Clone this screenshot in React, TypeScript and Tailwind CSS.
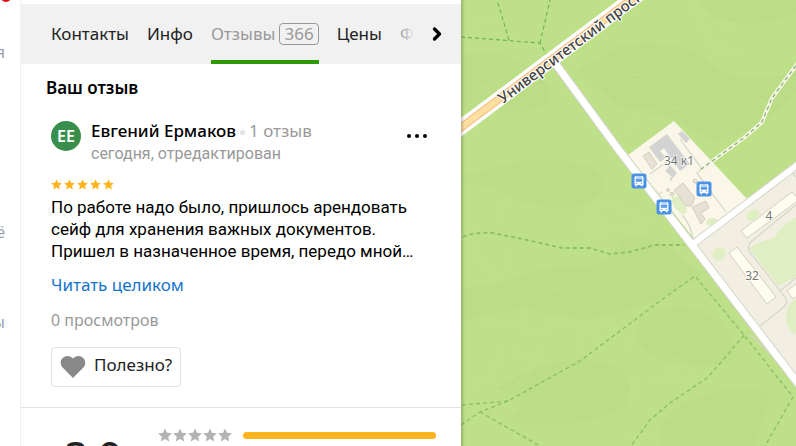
import { ChevronRight } from "lucide-react";
import clsx from "clsx";

const STAR =
  "M6 0.4 7.7 4.1 11.8 4.6 8.8 7.4 9.6 11.5 6 9.4 2.4 11.5 3.2 7.4 0.2 4.6 4.3 4.1z";

const Stars = ({ className }: { className: string }) => (
  <>
    {[0, 1, 2, 3, 4].map((i) => (
      <svg key={i} viewBox="0 0 12 12" className={clsx("fill-current", className)}>
        <path d={STAR} />
      </svg>
    ))}
  </>
);

const BusStop = ({ x, y }: { x: number; y: number }) => (
  <g transform={`translate(${x} ${y})`}>
    <rect x="-7.5" y="-7.5" width="15" height="15" rx="2.5" fill="#4c93e6" />
    <path
      d="M-3-5h6q1.3 0 1.5 1.5V4H3.6v1.2H1.8V4h-3.6v1.2h-1.8V4h-.9v-7.5Q-4.3-5-3-5z"
      fill="#fff"
    />
    <path d="M-3.2-2.4h6.4v3.2h-6.4z" fill="#5b9be8" />
    <path d="M-2.8-4h5.6M-3.2 2.4h1.4M1.8 2.4h1.4" stroke="#4c93e6" strokeWidth=".8" />
  </g>
);

const Forest = () => (
  <>
    <g fill="#bbdd86">
      <path d="M461 56q35-8 60 6t30 30-34 20-56-4z" />
      <path d="M500 165q50-12 94 3 24 24-10 36t-84-12-39 13v-30q20-2 39-10z" />
      <path d="M461 288q40-4 66-14t54-8 36-20 50 1l36 29-60 30-60 14-62-12-60 14z" />
      <path d="M530 370q35-14 70-8t30 32-70 30-45-10-20-26z" />
      <path d="M620 45q60-8 92 18t84 8v22l-30 30-48 20-50-26-50-10-40-36z" />
      <path d="M640 318q36-18 60-8t34 34-30 22-50-8-20-20z" />
      <path d="M690 400q44-18 80-6l-14 52h-96q-4-30 30-46z" />
      <path d="M700 0h96v14q-40 14-66 8T700 0z" />
    </g>
    <g fill="none" stroke="#c2e28c" strokeWidth="1">
      <path d="M475 25q14-8 25-2t20 22M470 88q20 2 30-8t26 2 26-7" />
      <path d="M500 160q20 12 13 28t-15 30M478 225q-8 18 3 34t22 18 4-22" />
      <path d="M590 212q14-13 29-4t27 10-10 9-30-2-16 9M590 222q-15 2-5 9t18 1" />
      <path d="M472 315q20 9 36 9t18-10 16-4-4-13 23-6M525 335q30-12 54-8t32-6" />
      <path d="M514 350q12 10 21 3t-4 16-18 6M580 337q16-8 19 2t-20 4" />
      <path d="M610 383q26-11 24 4t-20 7M655 380q28 6 36-6t-20-15" />
      <path d="M626 348q4-12 20-15t22-15M655 358q18-8 26 3t-24 6M690 320q20 2 26 14t-15 6" />
      <path d="M614 78q30-8 43 2t30-4M640 108q28 8 48-5t30 14 20 2" />
      <path d="M697 0q-4 14 5 26t12 25M715 45q12-9 10 4t14 2M723 28q14-11 12-1" />
      <path d="M628 130q6-18 28-22t30 8M735 92q6 14 19 8t10 18" />
      <path d="M465 385q16 3 26-11t8-23M630 438q22 4 36-10t26 4M666 418q24-9 28 0" />
    </g>
  </>
);

const MapView = () => (
  <svg
    viewBox="461 0 335 446"
    preserveAspectRatio="xMinYMin slice"
    className="h-full w-full"
    role="img"
    aria-label="Карта"
  >
    <rect x="461" width="335" height="446" fill="#bee088" />
    <Forest />
    <path d="M628 155 674 121 747 199 695 240z" fill="#faf7e9" />
    <path d="M695 242 796 168V382z" fill="#f2efe2" />

    <g fill="#dfeec3">
      <path d="M749 248 760 242 773 238 784 225 796 217V277L778 286z" />
      <path d="M672 197q8-2 12 4t2 11-9-2-5-13z" />
      <ellipse cx="712" cy="222" rx="6" ry="4" />
      <ellipse cx="753" cy="215" rx="7" ry="5" transform="rotate(-38 753 215)" />
      <ellipse cx="719" cy="254" rx="7" ry="6" transform="rotate(-38 719 254)" />
      <ellipse cx="799" cy="317" rx="13" ry="18" />
    </g>

    <g fill="none" stroke="#d6d5cb" strokeWidth="1.2">
      <path d="M796 205 752 241q-5 4-3 10L785 297q4 5-1 10L760 326M780 291 796 278" />
      <path d="M650 174 668 161M680 139 702 169 697 173 726 212M682 215q10 11 11 25M656 196l6-4M790 170l6 7M750 335 796 378" />
    </g>

    <g fill="#d3d3d3">
      <path d="M649 147 667 134 690 164 680 171 664 148 660 151 666 158 660 162z" />
      <path d="M678 134 682 131 690 139 686 143zM665 171 670 165 677 173 673 178z" />
      <circle cx="671" cy="179" r="1.5" />
    </g>
    <g fill="#e6e1d2" stroke="#d2cec0">
      <path d="M643 156 649 152 657 164 652 169z" />
      <path d="M674 190 683 183 695 198 691 206 686 206z" />
      <path d="M692 207 706 201 709 208 701 213 705 219 701 224z" />
      <circle cx="668" cy="190" r="1.5" />
      <circle cx="672" cy="194" r="2" />
      <circle cx="695" cy="181" r="2" />
    </g>
    <g fill="#fffdee" stroke="#d5cfc0">
      <path d="M741 231 792 192 799 200 747 238z" />
      <path d="M729 253 737 247 776 297 767 304z" />
      <path d="M787 291 800 281V294L793 299z" />
    </g>

    <path d="M800 60 772 98 762 122 745 137 700 170" fill="none" stroke="#f5f5e2" strokeWidth="4" />
    <path
      d="M800 60 772 98 762 122 745 137 700 170"
      fill="none"
      stroke="#7fae72"
      strokeWidth="1.2"
      strokeDasharray="4 3"
    />

    <g fill="none" stroke="#8cc068" strokeWidth="1.4" strokeDasharray="4 3">
      <path d="M461 37 540 43 548 57M540 43 550 0M509 40 497 0" stroke="#6fb35a" strokeWidth="1.2" />
      <path
        d="M463 237Q472 232 493 233L527 240 562 248 590 248 610 254 630 252 655 245 684 245"
        strokeWidth="1.8"
      />
      <path d="M462 405 508 401 580 361 660 301 695 276 744 335 793 397 765 446" />
      <path d="M744 335 730 352 707 378 670 403 650 420 631 446" />
      <path d="M508 401 480 412 461 425M480 412 540 446" />
    </g>

    <g fill="none">
      <path d="M555 63 618 149 695 249 800 386" stroke="#d5d5cd" strokeWidth="9" />
      <path d="M693 244 800 163" stroke="#d5d5cd" strokeWidth="8" />
      <path d="M555 63 618 149 695 249 800 386" stroke="#fff" strokeWidth="7" />
      <path d="M693 244 800 163" stroke="#fff" strokeWidth="6" />
      <path d="M455 132 640-7" stroke="#fff" strokeWidth="15" />
      <path d="M455 132 640-7" stroke="#f4b77a" strokeWidth="8" />
      <path d="M455 132 640-7" stroke="#fde0a0" strokeWidth="6" />
      <path id="avenue" d="M503 104 703-46" />
    </g>

    <g
      fill="#444"
      stroke="#fff"
      strokeWidth="2"
      strokeLinejoin="round"
      paintOrder="stroke"
      className="font-['Noto_Sans',sans-serif]"
    >
      <text fontSize="15" fontWeight="500">
        <textPath href="#avenue">Университетский проспект</textPath>
      </text>
      <g fontSize="12" fill="#777" textAnchor="middle" strokeOpacity=".7">
        <text x="679" y="165">34 к1</text>
        <text x="769" y="220">4</text>
        <text x="752" y="280">32</text>
      </g>
    </g>

    <BusStop x={639} y={181} />
    <BusStop x={704} y={189} />
    <BusStop x={664} y={207} />
  </svg>
);

const Tabs = () => (
  <nav className="mt-1 flex h-15 shrink-0 items-stretch bg-[#f1f1f1] pr-2.5 pl-[30px]">
    <div className="relative flex min-w-0 flex-1 gap-[18px] overflow-hidden text-[#222]">
      <button>Контакты</button>
      <button>Инфо</button>
      <button className="flex items-center gap-1 border-b-4 border-[#2c9a00] pt-1 text-[#999]">
        Отзывы
        <span className="rounded-sm border border-[#999] px-1 leading-5">366</span>
      </button>
      <button>Цены</button>
      <button>Фото</button>
      <div className="pointer-events-none absolute inset-y-0 right-0 w-12 bg-linear-to-r from-transparent to-[#f1f1f1] to-75%" />
    </div>
    <button aria-label="Следующие разделы" className="w-6">
      <ChevronRight size={20} strokeWidth={4} className="text-black" />
    </button>
  </nav>
);

const Review = () => (
  <article className="pr-7 pl-[30px]">
    <header className="flex items-start pt-[19px]">
      <div className="mt-0.5 mr-2.5 flex size-[30px] shrink-0 items-center justify-center rounded-full bg-[#388e4a] text-base font-semibold text-white">
        ЕЕ
      </div>
      <div className="flex-1 leading-6">
        <p className="text-[#999]">
          <span className="font-medium text-black">Евгений Ермаков</span>
          <span className="mx-1 inline-block size-[5px] rounded-full bg-[#e2e2e2] align-middle" />1
          отзыв
        </p>
        <p className="font-['Roboto',sans-serif] text-base leading-[22px] text-[#999]">
          сегодня, отредактирован
        </p>
      </div>
      <button aria-label="Ещё" className="mt-[5px] mr-1.5 flex h-6 items-center gap-1">
        <i className="size-1 rounded-full bg-black" />
        <i className="size-1 rounded-full bg-black" />
        <i className="size-1 rounded-full bg-black" />
      </button>
    </header>
    <div className="mt-3.5 flex gap-0.5 text-[#ffb41e]" role="img" aria-label="Оценка 5">
      <Stars className="size-[11px]" />
    </div>
    <p className="mt-1.5 font-['Roboto',sans-serif] leading-[22px] text-black">
      По работе надо было, пришлось арендовать
      <br />
      сейф для хранения важных документов.
      <br />
      Пришел в назначенное время, передо мной…
    </p>
    <a href="#review" className="mt-[11px] block leading-6 text-[#1473cc]">
      Читать целиком
    </a>
    <p className="mt-[11px] text-base text-[#999]">0 просмотров</p>
    <button className="mt-[15px] flex h-10 items-center gap-2 rounded border border-[#e2e2e2] px-2 pb-1 text-[#222]">
      <svg viewBox="0 0 26 24" className="mt-1 h-6 w-[26px] fill-[#888]">
        <path d="M13 23 2.6 12.6C-3.4 5 6.500-3.300 13 3.600 19.500-3.300 29.400 5 23.400 12.600z" />
      </svg>
      Полезно?
    </button>
  </article>
);

const App = () => {
  return (
    <div className="flex h-screen overflow-hidden bg-white font-['Noto_Sans',sans-serif] text-[17px]">
      <aside className="flex w-[21px] shrink-0 flex-col items-end overflow-hidden border-r border-[#efefef] pr-[15px] text-base leading-6 text-[#9a9fad]">
        <i className="-mt-2 -mr-1.5 size-2.5 shrink-0 rounded-full bg-[#e8000b]" />
        <span className="mt-[38px]">я</span>
        <span className="mt-[156px]">ё</span>
        <span className="mt-[66px]">ы</span>
      </aside>
      <main className="flex w-[440px] shrink-0 flex-col">
        <Tabs />
        <h2 className="mt-3 pl-[25px] leading-6 font-semibold text-black">Ваш отзыв</h2>
        <Review />
        <section className="mt-5 flex border-t border-[#e2e2e2] pr-[25px] pl-11">
          <div className="mt-5 w-[93px] text-[40px] leading-14 font-medium text-[#222]">3,9</div>
          <div className="mt-5 flex flex-1 items-center gap-[11px] self-start">
            <div className="flex gap-px text-[#b3b3b3]" role="img" aria-label="5 звёзд">
              <Stars className="size-3.5" />
            </div>
            <div className="h-[7px] flex-1 rounded-full bg-[#ffb41e]" />
          </div>
        </section>
      </main>
      <section className="relative min-w-0 flex-1">
        <MapView />
        <div className="absolute inset-y-0 left-0 w-1 bg-linear-to-r from-black/20 to-transparent" />
      </section>
    </div>
  );
};

export default App;
